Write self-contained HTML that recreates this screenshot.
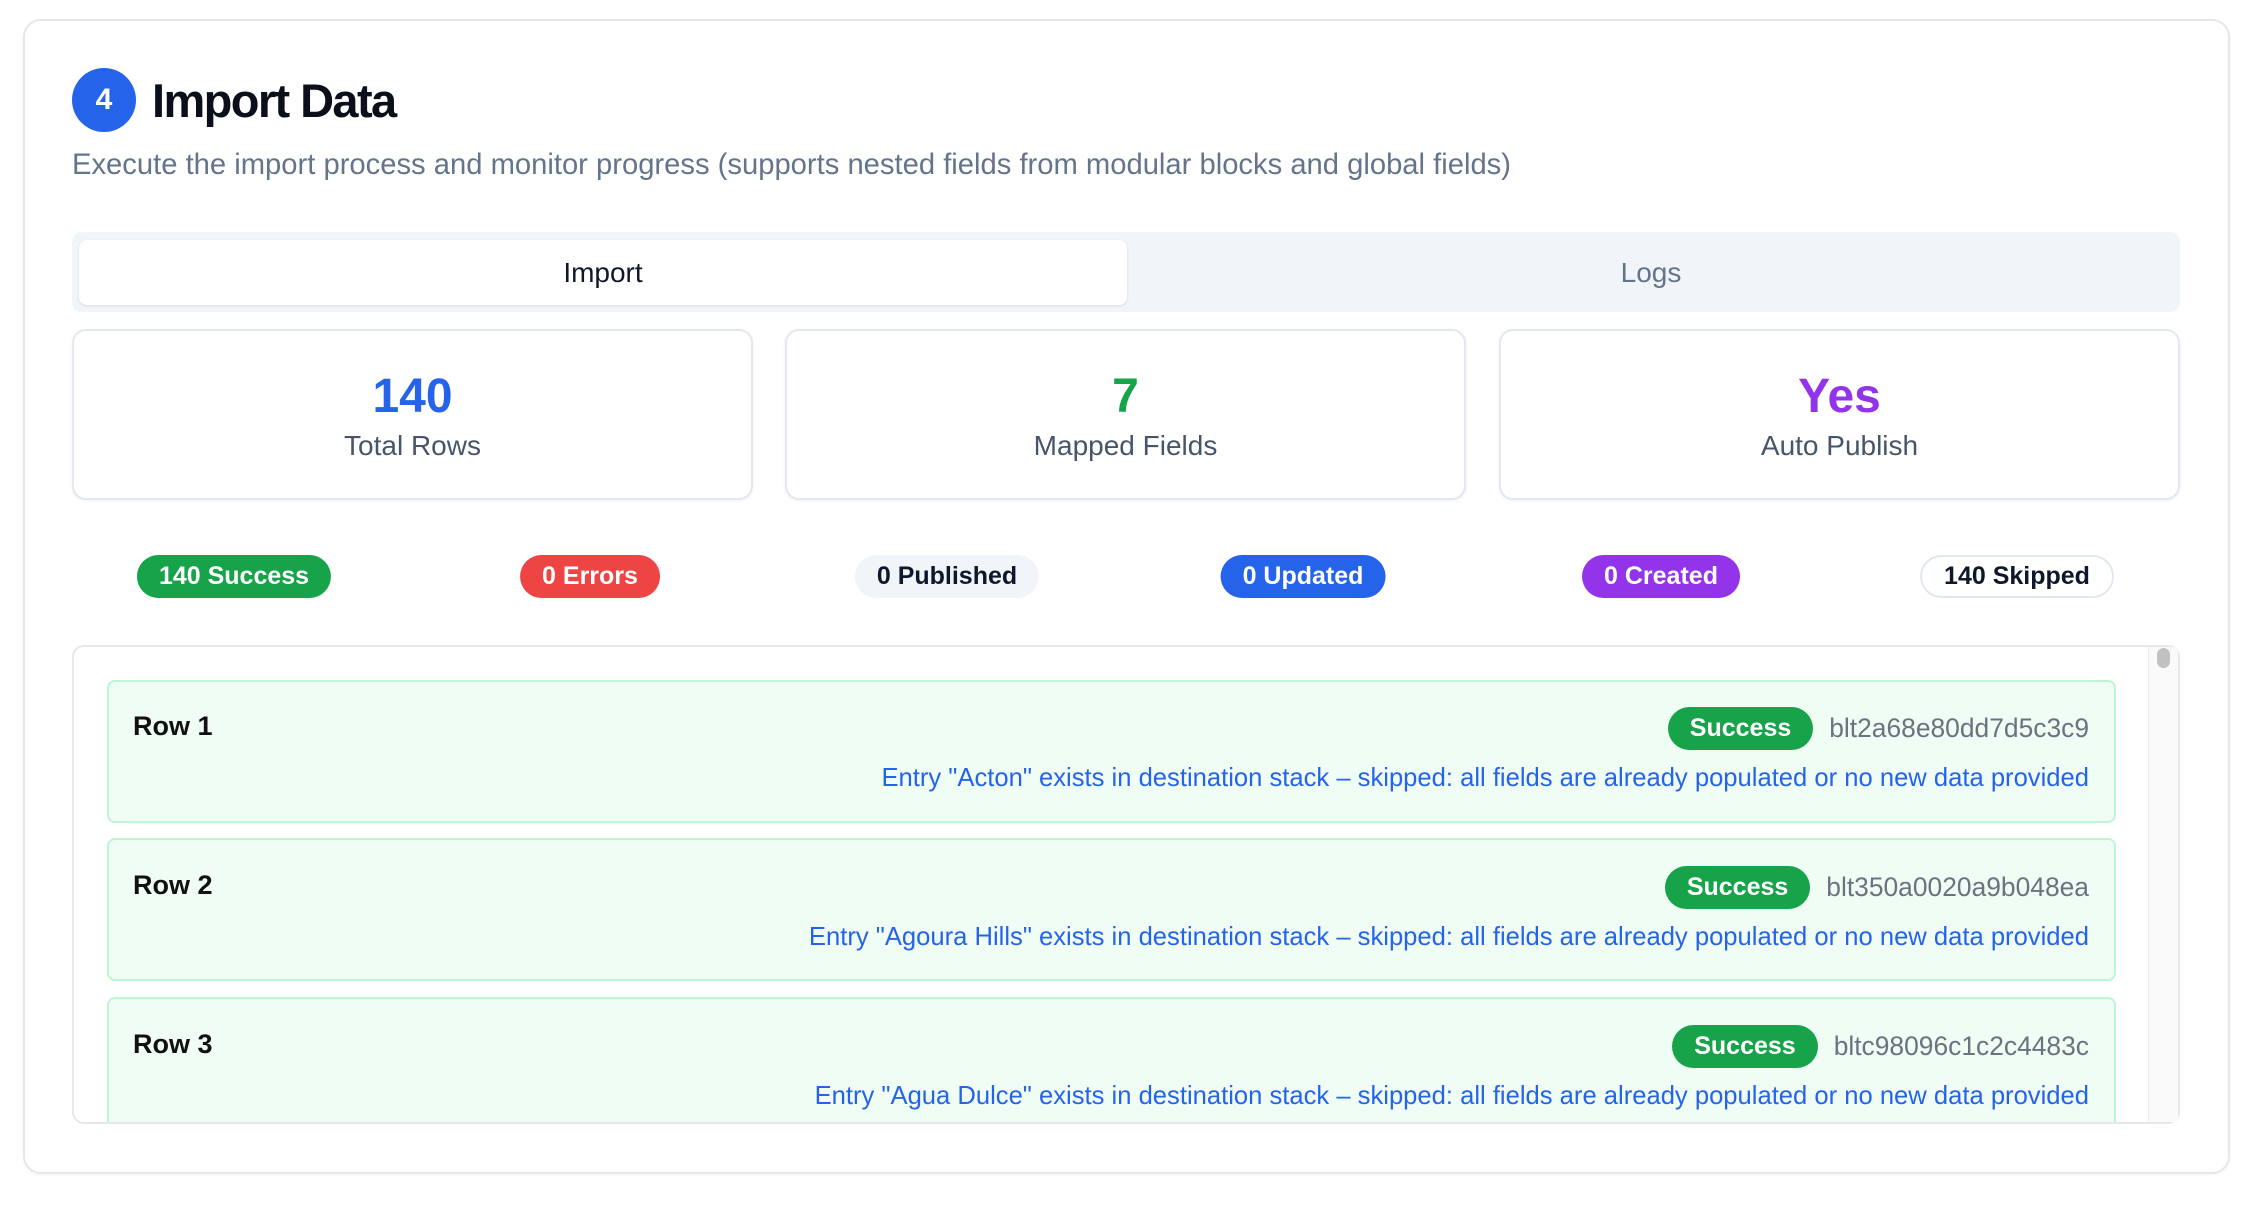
<!DOCTYPE html>
<html><head><meta charset="utf-8"><style>
*{box-sizing:border-box;margin:0;padding:0}
body{width:2262px;height:1208px;background:#fff;font-family:"Liberation Sans",sans-serif;position:relative;overflow:hidden;color:#0f172a}
.abs{position:absolute}
.card{left:23px;top:19px;width:2207px;height:1155px;border:2px solid #e5e7eb;border-radius:18px;box-shadow:0 1px 3px rgba(0,0,0,.05)}
.circ{left:72px;top:68px;width:64px;height:64px;border-radius:50%;background:#2563eb;color:#fff;font-weight:bold;font-size:30px;text-align:center;line-height:64px}
.title{left:152px;top:73px;font-size:47px;font-weight:bold;letter-spacing:-1.6px;color:#0b0f1a}
.sub{left:72px;top:149px;font-size:29.2px;color:#64748b}
.tabs{left:72px;top:232px;width:2108px;height:80px;background:#f1f5f9;border-radius:10px}
.tab1{left:79px;top:240px;width:1048px;height:65px;background:#fff;border-radius:8px;box-shadow:0 1px 3px rgba(0,0,0,.1);text-align:center;line-height:65px;font-size:28px;color:#0f172a}
.tab2{left:1127px;top:240px;width:1048px;height:65px;text-align:center;line-height:65px;font-size:28px;color:#64748b}
.stat{top:329px;width:681px;height:171px;border:2px solid #e2e8f0;border-radius:14px;text-align:center;box-shadow:0 1px 3px rgba(0,0,0,.06)}
.stat .n{font-size:48px;font-weight:bold;margin-top:38px;line-height:56px}
.stat .l{font-size:28px;color:#475569;margin-top:5px}
.badge{top:555px;height:43px;border-radius:22px;font-size:25px;font-weight:bold;line-height:43px;text-align:center;color:#fff;transform:translateX(-50%);padding:0 22px;white-space:nowrap}
.list{left:72px;top:645px;width:2108px;height:479px;border:2px solid #e5e7eb;border-radius:12px;overflow:hidden}
.sb{left:2148px;top:647px;width:30px;height:475px;background:#fafafa;border-left:1px solid #eee}
.thumb{left:2157px;top:648px;width:13px;height:20px;background:#c1c1c1;border-radius:7px}
.row{left:107px;width:2009px;height:143px;background:#f0fdf4;border:2px solid #bbf7d0;border-radius:8px}
.rl{left:133px;font-size:27px;font-weight:bold;color:#111}
.sbad{height:43px;border-radius:22px;background:#16a34a;color:#fff;font-weight:bold;font-size:25px;line-height:43px;padding:0 22px}
.rr{right:173px;display:flex;align-items:center;gap:16px}
.hash{font-size:26.4px;color:#6b7280}
.msg{right:173px;font-size:25.6px;color:#2563eb;white-space:nowrap}
</style></head><body>
<div class="abs card"></div>
<div class="abs circ">4</div>
<div class="abs title">Import Data</div>
<div class="abs sub">Execute the import process and monitor progress (supports nested fields from modular blocks and global fields)</div>
<div class="abs tabs"></div>
<div class="abs tab1">Import</div>
<div class="abs tab2">Logs</div>
<div class="abs stat" style="left:72px"><div class="n" style="color:#2563eb">140</div><div class="l">Total Rows</div></div>
<div class="abs stat" style="left:785px"><div class="n" style="color:#16a34a">7</div><div class="l">Mapped Fields</div></div>
<div class="abs stat" style="left:1499px"><div class="n" style="color:#9333ea">Yes</div><div class="l">Auto Publish</div></div>
<div class="abs badge" style="left:234px;background:#16a34a">140 Success</div>
<div class="abs badge" style="left:590px;background:#ef4444">0 Errors</div>
<div class="abs badge" style="left:947px;background:#f1f5f9;color:#0f172a">0 Published</div>
<div class="abs badge" style="left:1303px;background:#2563eb">0 Updated</div>
<div class="abs badge" style="left:1661px;background:#9333ea">0 Created</div>
<div class="abs badge" style="left:2017px;background:#fff;color:#0f172a;border:2px solid #e2e8f0;line-height:39px">140 Skipped</div>
<div class="abs list"></div>
<div class="abs row" style="top:680px"></div>
<div class="abs rl" style="top:711px">Row 1</div>
<div class="abs rr" style="top:707px"><span class="sbad">Success</span><span class="hash">blt2a68e80dd7d5c3c9</span></div>
<div class="abs msg" style="top:764px">Entry "Acton" exists in destination stack – skipped: all fields are already populated or no new data provided</div>
<div class="abs row" style="top:838px"></div>
<div class="abs rl" style="top:870px">Row 2</div>
<div class="abs rr" style="top:866px"><span class="sbad">Success</span><span class="hash">blt350a0020a9b048ea</span></div>
<div class="abs msg" style="top:923px">Entry "Agoura Hills" exists in destination stack – skipped: all fields are already populated or no new data provided</div>
<div class="abs row" style="top:997px;height:125px;border-bottom:none;border-radius:8px 8px 0 0"></div>
<div class="abs rl" style="top:1029px">Row 3</div>
<div class="abs rr" style="top:1025px"><span class="sbad">Success</span><span class="hash">bltc98096c1c2c4483c</span></div>
<div class="abs msg" style="top:1082px">Entry "Agua Dulce" exists in destination stack – skipped: all fields are already populated or no new data provided</div>
<div class="abs sb"></div>
<div class="abs thumb"></div>
</body></html>
